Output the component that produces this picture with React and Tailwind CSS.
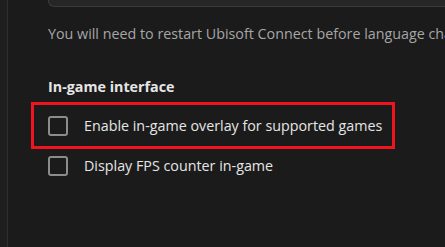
const Checkbox = () => (
  <span className="block h-[20px] w-[20px] shrink-0 rounded-[3px] border-2 border-[#8c8c8c]" />
);

const App = () => {
  return (
    <div
      className="flex h-[247px] w-[445px] overflow-hidden bg-[#1b1b1b]"
      style={{ fontFamily: '"Open Sans", "Noto Sans", sans-serif' }}
    >
      <div className="w-[8px] shrink-0 border-r border-[#2e2e2e] bg-[#1e1e1e]" />
      <div className="flex min-w-0 flex-1 flex-col pl-[40px]">
        <div className="-mr-[20px] h-[7px] rounded-bl-[6px] border-b border-l border-[#3b3b3b] bg-[#262626]" />
        <p className="mt-[18px] whitespace-nowrap text-[14.3px] leading-[18px] text-[#a6a6a6]">
          You will need to restart Ubisoft Connect before language changes take effect.
        </p>
        <h3 className="mt-[34px] text-[14.3px] font-bold leading-[20px] text-[#e6e6e6]">
          In-game interface
        </h3>
        <label className="-ml-[17px] mt-[5px] flex h-[47px] w-[364px] items-center gap-[16px] border-[3px] border-[#f0141e] pl-[14px]">
          <Checkbox />
          <span className="text-[14.3px] text-[#e6e6e6]">
            Enable in-game overlay for supported games
          </span>
        </label>
        <label className="mt-[6px] flex items-center gap-[16px]">
          <Checkbox />
          <span className="text-[14.3px] text-[#e6e6e6]">Display FPS counter in-game</span>
        </label>
      </div>
    </div>
  );
};

export default App;
